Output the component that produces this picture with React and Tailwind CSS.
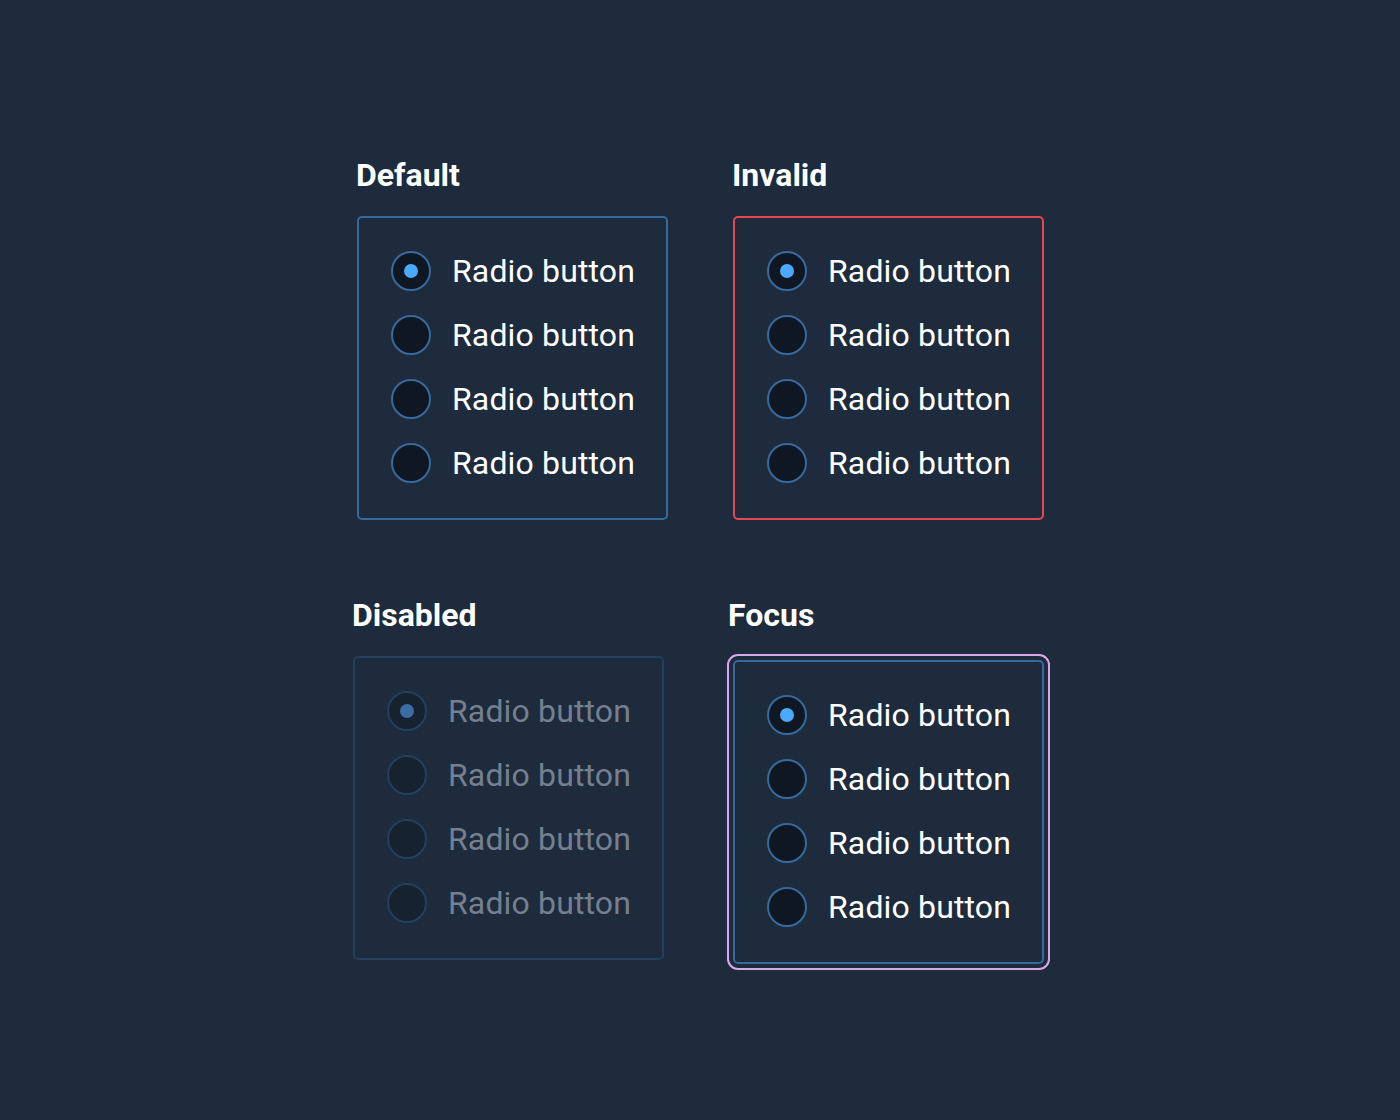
import React from 'react';

const labels = ['Radio button', 'Radio button', 'Radio button', 'Radio button'];

// Single radio row
function Radio({ checked, disabled, label }) {
  return (
    <div className="flex h-16 items-center gap-[21px]">
      <span
        className={
          'flex h-10 w-10 shrink-0 items-center justify-center rounded-full border-2 ' +
          (disabled ? 'border-[#263f5c] bg-[#172231]' : 'border-[#36699c] bg-[#0e1722]')
        }
      >
        {checked && (
          <span className={'h-[14px] w-[14px] rounded-full ' + (disabled ? 'bg-[#3a6ea3]' : 'bg-[#4ba9ff]')} />
        )}
      </span>
      <span
        className={
          'text-[32px] leading-none tracking-[0.15px] ' + (disabled ? 'text-[#74808f]' : 'text-white')
        }
      >
        {label}
      </span>
    </div>
  );
}

function Group({ title, boxClass, disabled, shift }) {
  return (
    <div className="flex flex-col">
      <h2 className="mb-[21px] -ml-px h-10 text-[32px] font-bold leading-10 text-white">{title}</h2>
      <div
        className={
          'w-[311px] rounded-[5px] border-2 pl-8 pr-6 pt-[21px] pb-[23px] ' + boxClass + (shift ? ' ml-1 mt-1' : '')
        }
      >
        {labels.map((l, i) => (
          <Radio key={i} checked={i === 0} disabled={disabled} label={l} />
        ))}
      </div>
    </div>
  );
}

export default function App() {
  return (
    <div
      className="min-h-[1120px] w-full bg-[#1d2b3c] pt-[155px]"
      style={{ fontFamily: 'Roboto, "Liberation Sans", sans-serif' }}
    >
      <div className="ml-[357px] flex gap-[65px]">
        <Group title="Default" boxClass="border-[#36699c]" />
        <Group title="Invalid" boxClass="border-[#e5484d]" />
      </div>
      <div className="ml-[353px] mt-[75px] flex gap-[65px]">
        <Group title="Disabled" boxClass="border-[#263f5c]" disabled />
        <Group
          title="Focus"
          boxClass="border-[#36699c] outline-2 outline-offset-4 outline-[#d9a6e6] outline-solid"
          shift
        />
      </div>
    </div>
  );
}
